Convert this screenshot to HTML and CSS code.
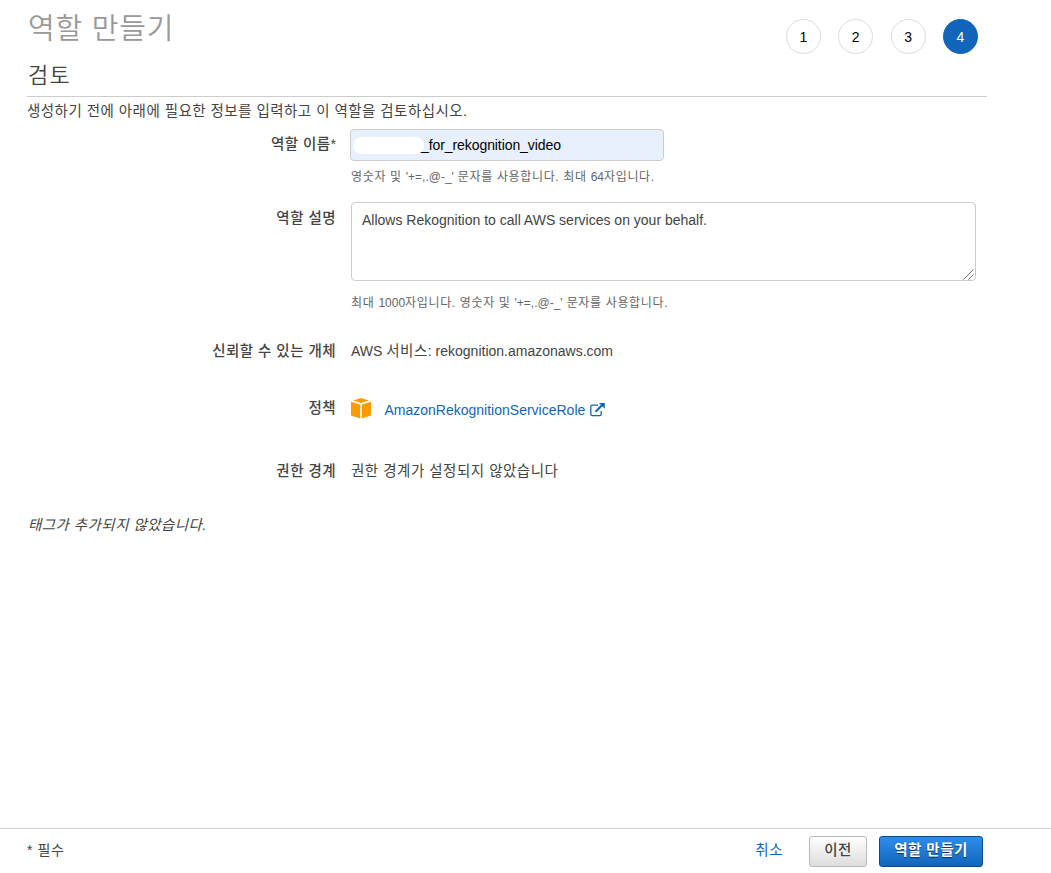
FILE: index.html
```html
<!DOCTYPE html>
<html lang="ko">
<head>
<meta charset="UTF-8">
<meta name="viewport" content="width=device-width, initial-scale=1">
<title>역할 만들기</title>
<link rel="stylesheet" href="styles.css">
</head>
<body>

<main class="page">
  <header class="page-header">
    <h1>역할 만들기</h1>
    <ol class="steps">
      <li>1</li>
      <li>2</li>
      <li>3</li>
      <li class="active">4</li>
    </ol>
  </header>

  <h2>검토</h2>
  <p class="intro">생성하기 전에 아래에 필요한 정보를 입력하고 이 역할을 검토하십시오.</p>

  <div class="row row-name">
    <div class="label">역할 이름<span class="star">*</span></div>
    <div class="field">
      <div class="input"><span class="mask"></span><span class="value">_for_rekognition_video</span></div>
      <p class="help help-name">영숫자 및 <span class="latin">'+=,.@-_'</span> 문자를 사용합니다. 최대 <span class="latin">64</span>자입니다.</p>
    </div>
  </div>

  <div class="row row-desc">
    <div class="label">역할 설명</div>
    <div class="field">
      <div class="textarea-wrap">
        <textarea class="textarea">Allows Rekognition to call AWS services on your behalf.</textarea>
        <svg class="grip" width="11" height="11" viewBox="0 0 11 11" stroke="#555" stroke-width=".8">
          <path d="M.5 10.5L10.5 .5M5.5 10.5L10.5 5.5"/>
        </svg>
      </div>
      <p class="help help-desc">최대 <span class="latin">1000</span>자입니다. 영숫자 및 <span class="latin">'+=,.@-_'</span> 문자를 사용합니다.</p>
    </div>
  </div>

  <div class="row row-trust">
    <div class="label">신뢰할 수 있는 개체</div>
    <div class="field text">AWS <span class="ko">서비스</span>: rekognition.amazonaws.com</div>
  </div>

  <div class="row row-policy">
    <div class="label">정책</div>
    <div class="field policy">
      <svg class="cube" width="20" height="21" viewBox="0 0 20 21" fill="#ff9900">
        <path d="M10 0L18 2.6 10 5 2 2.6z"/>
        <path d="M0 3.7L9.2 6.5V20.4L0 17.6z"/>
        <path d="M20 3.7L10.8 6.5V20.4L20 17.6z"/>
      </svg>
      <a href="#">AmazonRekognitionServiceRole</a>
      <svg class="external" width="15" height="14" viewBox="0 0 15 14" fill="none" stroke="#1166bb">
        <path d="M8 2.2H2.2Q.8 2.2.8 3.6V11.2Q.8 12.6 2.2 12.6H9.8Q11.2 12.6 11.2 11.2V8" stroke-width="1.3"/>
        <path d="M5.5 8.8L12.3 2" stroke-width="2"/>
        <path d="M9 0H14.8V5.8z" fill="#1166bb" stroke="none"/>
      </svg>
    </div>
  </div>

  <div class="row row-boundary">
    <div class="label">권한 경계</div>
    <div class="field text ko">권한 경계가 설정되지 않았습니다</div>
  </div>

  <p class="no-tags">태그가 추가되지 않았습니다.</p>
</main>

<footer class="footer">
  <span class="required">* 필수</span>
  <a class="cancel" href="#">취소</a>
  <button class="btn btn-prev">이전</button>
  <button class="btn btn-primary">역할 만들기</button>
</footer>

</body>
</html>
```

FILE: styles.css
```css
* {
  box-sizing: border-box;
}
body {
  margin: 0;
  height: 873px;
  display: flex;
  flex-direction: column;
  font-family: "Liberation Sans", "Noto Sans CJK KR", sans-serif;
  font-size: 14px;
  line-height: 20px;
  color: #444;
  background: #fff;
  overflow: hidden;
}
h1, h2, p, ol {
  margin: 0;
  padding: 0;
  font-weight: normal;
}
a {
  color: #1166bb;
  text-decoration: none;
}
.page {
  flex: 1;
  width: 987px;
  padding-left: 27px;
}
.page-header {
  display: flex;
  justify-content: space-between;
  height: 56px;
  padding-right: 9px;
}
h1 {
  padding: 9px 0 0 1px;
  font-size: 29px;
  line-height: 40px;
  letter-spacing: 0.8px;
  color: #999;
  font-weight: 350;
}
.steps {
  display: flex;
  gap: 17.4px;
  padding-top: 19px;
  list-style: none;
}
.steps li {
  width: 35px;
  height: 35px;
  border: 1px solid #ddd;
  border-radius: 50%;
  line-height: 34px;
  text-align: center;
  color: #000;
}
.steps .active {
  background: #1166bb;
  border-color: #1166bb;
  color: #fff;
}
h2 {
  height: 41px;
  padding-left: 1px;
  border-bottom: 1px solid #ccc;
  font-size: 22px;
  line-height: 40px;
  letter-spacing: 1.2px;
  font-weight: 350;
}
.intro {
  height: 32px;
  padding-top: 4px;
  font-size: 14.5px;
  letter-spacing: 0.46px;
}
.ko {
  font-size: 14.5px;
  letter-spacing: 0.5px;
}
.row {
  display: flex;
}
.label {
  width: 309px;
  margin-right: 14px;
  text-align: right;
  font-size: 14.5px;
  font-weight: 500;
  letter-spacing: 0.45px;
}
.star {
  font-size: 14px;
  font-weight: normal;
  letter-spacing: 0;
}
.field {
  width: 626px;
}
.text {
  padding-left: 1px;
}
.row-name {
  height: 73px;
}
.row-name .label {
  padding-top: 5px;
}
.input {
  display: flex;
  align-items: center;
  width: 314px;
  height: 32px;
  padding-left: 2px;
  border: 1px solid #ccc;
  border-radius: 4px;
  background: #e8f0fe;
  color: #000;
}
.value {
  letter-spacing: -0.08px;
}
.mask {
  width: 71px;
  height: 17px;
  margin-right: -3px;
  border-radius: 9px;
  background: #fff;
}
.help {
  font-size: 12px;
  line-height: 18px;
  color: #666;
  padding-left: 1px;
  letter-spacing: 0.65px;
}
.latin {
  letter-spacing: 0;
}
.help-name {
  padding-top: 7px;
}
.row-desc {
  height: 139px;
}
.row-desc .label {
  padding-top: 6px;
}
.textarea-wrap {
  position: relative;
  width: 625px;
  margin-left: 1px;
}
.textarea {
  display: block;
  width: 100%;
  height: 79px;
  padding: 7px 10px;
  border: 1px solid #ccc;
  border-radius: 4px;
  font: inherit;
  color: #444;
  outline: none;
  resize: none;
}
.grip {
  position: absolute;
  right: 2px;
  bottom: 1px;
}
.help-desc {
  padding-top: 13px;
}
.row-trust {
  height: 57px;
}
.row-policy {
  height: 63px;
}
.policy {
  display: flex;
  align-items: flex-start;
}
.policy a {
  padding-top: 2px;
}
.cube {
  margin: 0 13.5px 0 1px;
}
.external {
  margin: 5px 0 0 4.5px;
}
.row-boundary {
  height: 54px;
}
.no-tags {
  padding-left: 1px;
  font-size: 14.5px;
  font-style: italic;
  letter-spacing: 0.44px;
}
.footer {
  display: flex;
  height: 45px;
  padding: 7px 68px 0 27px;
  border-top: 1px solid #ccc;
}
.required {
  flex: 1;
  padding-top: 4px;
  letter-spacing: 0.6px;
}
.cancel {
  margin-right: 26px;
  padding-top: 4px;
  font-size: 14.5px;
  letter-spacing: 0.5px;
}
.btn {
  height: 31px;
  border: 1px solid #b8b8b8;
  border-radius: 3px;
  padding: 0 0 3px;
  font-family: inherit;
  font-size: 14.5px;
  line-height: 26px;
  font-weight: 500;
  letter-spacing: 0.5px;
}
.btn-prev {
  width: 58px;
  margin-right: 12px;
  background: linear-gradient(#fff, #ddd);
  color: #444;
}
.btn-primary {
  width: 104px;
  border-color: #0a4a8c;
  background: linear-gradient(#2e8ded, #1166bb);
  color: #fff;
  font-weight: bold;
  text-shadow: 0 1px 1px rgba(0, 0, 0, 0.6);
}
```
